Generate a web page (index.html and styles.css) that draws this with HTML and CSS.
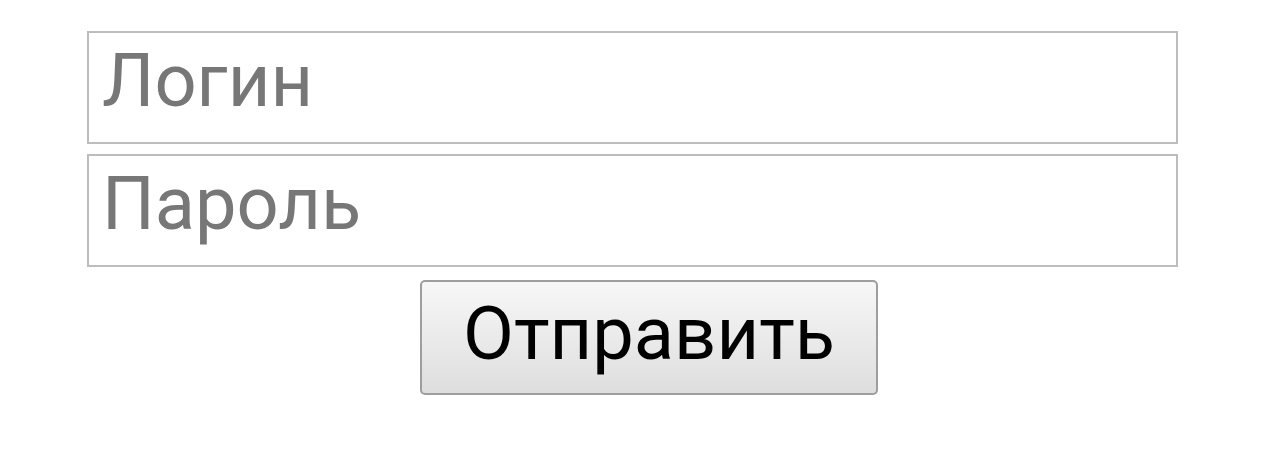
FILE: index.html
```html
<!DOCTYPE html>
<html lang="ru">
<head>
  <meta charset="UTF-8" />
  <meta name="viewport" content="width=device-width, initial-scale=1.0">
  <title>Вход</title>
  <link rel="stylesheet" href="styles.css">
</head>
<body>
  <form class="login">
    <input class="field" type="text" placeholder="Логин">
    <input class="field" type="password" placeholder="Пароль">
    <div class="actions">
      <button class="submit" type="submit">Отправить</button>
    </div>
  </form>
</body>
</html>
```

FILE: styles.css
```css
* {
  margin: 0;
  padding: 0;
  box-sizing: border-box;
}
body {
  font-family: Roboto, 'Noto Sans', sans-serif;
  background: #ffffff;
  padding: 31px 0 0 87px;
}
.login {
  width: 1091px;
  display: flex;
  flex-direction: column;
  gap: 10px;
}
.field {
  height: 113px;
  border: 2px solid #bdbdbd;
  padding: 0 14px 14px 13px;
  font-family: inherit;
  font-size: 74px;
  color: #222;
  background: #fff;
  outline: none;
}
.field::placeholder {
  color: #777;
}
.actions {
  margin-top: 3px;
  padding-left: 333px;
}
.submit {
  width: 458px;
  height: 115px;
  padding-bottom: 8px;
  border: 2px solid #9e9e9e;
  border-radius: 5px;
  background: linear-gradient(#f7f7f7, #dedede);
  font-family: inherit;
  font-size: 74px;
  color: #000;
}
```
